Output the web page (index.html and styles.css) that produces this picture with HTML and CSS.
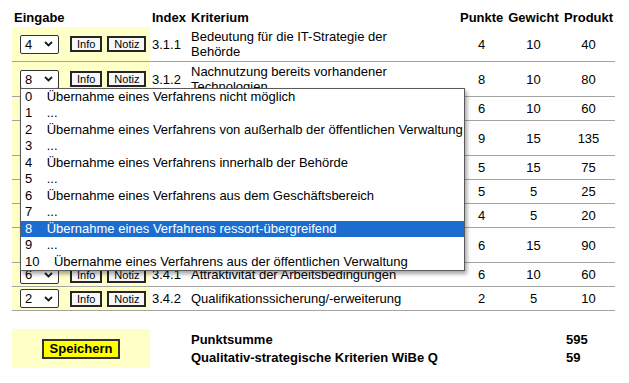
FILE: index.html
```html
<!DOCTYPE html>
<html lang="de">
<head>
    <meta charset="UTF-8">
    <title>WiBe Q - Qualitativ-strategische Kriterien</title>
    <link rel="stylesheet" href="styles.css">
</head>
<body>
<div class="page">
    <table class="crit">
        <colgroup>
            <col class="c-in">
            <col class="c-idx">
            <col class="c-krit">
            <col class="c-pkt">
            <col class="c-gew">
            <col class="c-prod">
        </colgroup>
        <thead>
            <tr>
                <th class="in-head">Eingabe</th>
                <th>Index</th>
                <th>Kriterium</th>
                <th class="num">Punkte</th>
                <th class="num">Gewicht</th>
                <th class="num">Produkt</th>
            </tr>
        </thead>
        <tbody>
            <tr>
                <td class="in"><div class="ctrl"><span class="sel"><span class="val">4</span><svg class="chev" width="9" height="6" viewBox="0 0 9 6"><path d="M1 1 L4.5 4.5 L8 1" fill="none" stroke="#1a1a1a" stroke-width="1.8"/></svg></span><button class="btn info">Info</button><button class="btn notiz">Notiz</button></div></td>
                <td class="idx">3.1.1</td>
                <td class="krit">Bedeutung für die IT-Strategie der Behörde</td>
                <td class="num">4</td><td class="num">10</td><td class="num">40</td>
            </tr>
            <tr>
                <td class="in"><div class="ctrl"><span class="sel open"><span class="val">8</span><svg class="chev" width="9" height="6" viewBox="0 0 9 6"><path d="M1 1 L4.5 4.5 L8 1" fill="none" stroke="#1a1a1a" stroke-width="1.8"/></svg>
                    <!-- open dropdown of this select -->
                    <ul class="popup">
                        <li>0    Übernahme eines Verfahrens nicht möglich</li>
                        <li>1    ...</li>
                        <li>2    Übernahme eines Verfahrens von außerhalb der öffentlichen Verwaltung</li>
                        <li>3    ...</li>
                        <li>4    Übernahme eines Verfahrens innerhalb der Behörde</li>
                        <li>5    ...</li>
                        <li>6    Übernahme eines Verfahrens aus dem Geschäftsbereich</li>
                        <li>7    ...</li>
                        <li class="hl">8    Übernahme eines Verfahrens ressort-übergreifend</li>
                        <li>9    ...</li>
                        <li>10    Übernahme eines Verfahrens aus der öffentlichen Verwaltung</li>
                    </ul>
                </span><button class="btn info">Info</button><button class="btn notiz">Notiz</button></div></td>
                <td class="idx">3.1.2</td>
                <td class="krit">Nachnutzung bereits vorhandener Technologien</td>
                <td class="num">8</td><td class="num">10</td><td class="num">80</td>
            </tr>
            <tr>
                <td class="in"><div class="ctrl"><span class="sel"><span class="val">6</span><svg class="chev" width="9" height="6" viewBox="0 0 9 6"><path d="M1 1 L4.5 4.5 L8 1" fill="none" stroke="#1a1a1a" stroke-width="1.8"/></svg></span><button class="btn info">Info</button><button class="btn notiz">Notiz</button></div></td>
                <td class="idx">3.1.3</td>
                <td class="krit">Einhaltung von Standards</td>
                <td class="num">6</td><td class="num">10</td><td class="num">60</td>
            </tr>
            <tr>
                <td class="in"><div class="ctrl"><span class="sel"><span class="val">9</span><svg class="chev" width="9" height="6" viewBox="0 0 9 6"><path d="M1 1 L4.5 4.5 L8 1" fill="none" stroke="#1a1a1a" stroke-width="1.8"/></svg></span><button class="btn info">Info</button><button class="btn notiz">Notiz</button></div></td>
                <td class="idx">3.2.1</td>
                <td class="krit">Erfüllung von Datenschutz- und Sicherheitsanforderungen</td>
                <td class="num">9</td><td class="num">15</td><td class="num">135</td>
            </tr>
            <tr>
                <td class="in"><div class="ctrl"><span class="sel"><span class="val">5</span><svg class="chev" width="9" height="6" viewBox="0 0 9 6"><path d="M1 1 L4.5 4.5 L8 1" fill="none" stroke="#1a1a1a" stroke-width="1.8"/></svg></span><button class="btn info">Info</button><button class="btn notiz">Notiz</button></div></td>
                <td class="idx">3.2.2</td>
                <td class="krit">Ordnungsmäßigkeit der Abläufe</td>
                <td class="num">5</td><td class="num">15</td><td class="num">75</td>
            </tr>
            <tr>
                <td class="in"><div class="ctrl"><span class="sel"><span class="val">5</span><svg class="chev" width="9" height="6" viewBox="0 0 9 6"><path d="M1 1 L4.5 4.5 L8 1" fill="none" stroke="#1a1a1a" stroke-width="1.8"/></svg></span><button class="btn info">Info</button><button class="btn notiz">Notiz</button></div></td>
                <td class="idx">3.3.1</td>
                <td class="krit">Erfüllung gesetzlicher Vorgaben</td>
                <td class="num">5</td><td class="num">5</td><td class="num">25</td>
            </tr>
            <tr>
                <td class="in"><div class="ctrl"><span class="sel"><span class="val">4</span><svg class="chev" width="9" height="6" viewBox="0 0 9 6"><path d="M1 1 L4.5 4.5 L8 1" fill="none" stroke="#1a1a1a" stroke-width="1.8"/></svg></span><button class="btn info">Info</button><button class="btn notiz">Notiz</button></div></td>
                <td class="idx">3.3.2</td>
                <td class="krit">Beschleunigung von Abläufen</td>
                <td class="num">4</td><td class="num">5</td><td class="num">20</td>
            </tr>
            <tr>
                <td class="in"><div class="ctrl"><span class="sel"><span class="val">6</span><svg class="chev" width="9" height="6" viewBox="0 0 9 6"><path d="M1 1 L4.5 4.5 L8 1" fill="none" stroke="#1a1a1a" stroke-width="1.8"/></svg></span><button class="btn info">Info</button><button class="btn notiz">Notiz</button></div></td>
                <td class="idx">3.3.3</td>
                <td class="krit">Verbesserung der Qualität der Arbeitsergebnisse</td>
                <td class="num">6</td><td class="num">15</td><td class="num">90</td>
            </tr>
            <tr>
                <td class="in"><div class="ctrl"><span class="sel"><span class="val">6</span><svg class="chev" width="9" height="6" viewBox="0 0 9 6"><path d="M1 1 L4.5 4.5 L8 1" fill="none" stroke="#1a1a1a" stroke-width="1.8"/></svg></span><button class="btn info">Info</button><button class="btn notiz">Notiz</button></div></td>
                <td class="idx">3.4.1</td>
                <td class="krit">Attraktivität der Arbeitsbedingungen</td>
                <td class="num">6</td><td class="num">10</td><td class="num">60</td>
            </tr>
            <tr>
                <td class="in"><div class="ctrl"><span class="sel"><span class="val">2</span><svg class="chev" width="9" height="6" viewBox="0 0 9 6"><path d="M1 1 L4.5 4.5 L8 1" fill="none" stroke="#1a1a1a" stroke-width="1.8"/></svg></span><button class="btn info">Info</button><button class="btn notiz">Notiz</button></div></td>
                <td class="idx">3.4.2</td>
                <td class="krit">Qualifikationssicherung/-erweiterung</td>
                <td class="num">2</td><td class="num">5</td><td class="num">10</td>
            </tr>
        </tbody>
    </table>

    <!-- Save + totals -->
    <div class="footer">
        <div class="save-box">
            <button class="save">Speichern</button>
        </div>
        <table class="sum">
            <tr><td class="sum-label">Punktsumme</td><td>595</td></tr>
            <tr><td class="sum-label">Qualitativ-strategische Kriterien WiBe Q</td><td>59</td></tr>
        </table>
    </div>
</div>
</body>
</html>
```

FILE: styles.css
```css
body {
    margin: 0;
    font-family: "Liberation Sans", Arial, sans-serif;
    font-size: 13px;
    line-height: 15px;
    color: #000;
    background: #fff;
}

.page {
    padding: 8px 0 0 12px;
}

/* Criteria table */
.crit {
    border-collapse: collapse;
    border-spacing: 0;
    table-layout: fixed;
    width: 603px;
}

.c-in { width: 138px; }
.c-idx { width: 39px; }
.c-krit { width: 269px; }
.c-pkt { width: 47px; }
.c-gew { width: 57px; }
.c-prod { width: 53px; }

.crit th {
    font-weight: bold;
    text-align: left;
    padding: 2px;
    white-space: nowrap;
}

.crit th.num {
    text-align: center;
}

.crit td {
    padding: 2px;
    vertical-align: middle;
    border-bottom: 1px solid #a4a4a4;
}

.crit td.in {
    background-color: #ffffc8;
    padding-left: 8px;
}

.crit td.krit {
    padding-right: 32px;
}

.crit td.num {
    text-align: center;
}

.ctrl {
    display: flex;
    align-items: center;
}

/* fake select box */
.sel {
    position: relative;
    display: inline-flex;
    align-items: center;
    justify-content: space-between;
    box-sizing: border-box;
    width: 39px;
    height: 19px;
    padding: 0 5px 0 4px;
    border: 1px solid #333;
    border-radius: 2px;
    background: #fff;
}

.chev {
    display: block;
}

.btn {
    box-sizing: border-box;
    height: 16px;
    padding: 0 5px;
    margin: 0 0 0 5px;
    font-family: "Liberation Sans", Arial, sans-serif;
    font-size: 11px;
    line-height: 12px;
    color: #000;
    background: #f7f7f7;
    border: 2px solid #262626;
    border-radius: 0;
}

.btn.info {
    margin-left: 11px;
}

/* open dropdown list */
.popup {
    position: absolute;
    top: 17px;
    left: -1px;
    z-index: 10;
    box-sizing: border-box;
    width: 445px;
    margin: 0;
    padding: 0;
    list-style: none;
    background: #fff;
    border: 1px solid #5a5a5a;
    box-shadow: 2px 3px 4px rgba(0, 0, 0, 0.35);
}

.popup li {
    padding-left: 4px;
    line-height: 16.5px;
    white-space: pre;
}

.popup li.hl {
    background-color: #1c6dcf;
    color: #fff;
}

/* footer */
.footer {
    display: flex;
    align-items: center;
    margin-top: 18px;
}

.save-box {
    display: flex;
    justify-content: center;
    align-items: center;
    width: 138px;
    height: 39px;
    background-color: #ffffc8;
}

.save {
    box-sizing: border-box;
    height: 20px;
    padding: 0 6px;
    font-family: "Liberation Sans", Arial, sans-serif;
    font-size: 13px;
    font-weight: bold;
    line-height: 16px;
    color: #000;
    background: #ffff00;
    border: 2px solid #333;
}

.sum {
    border-collapse: collapse;
    margin-left: 41px;
    font-weight: bold;
}

.sum td {
    padding: 0;
    line-height: 18px;
}

.sum-label {
    width: 375px;
}
```
